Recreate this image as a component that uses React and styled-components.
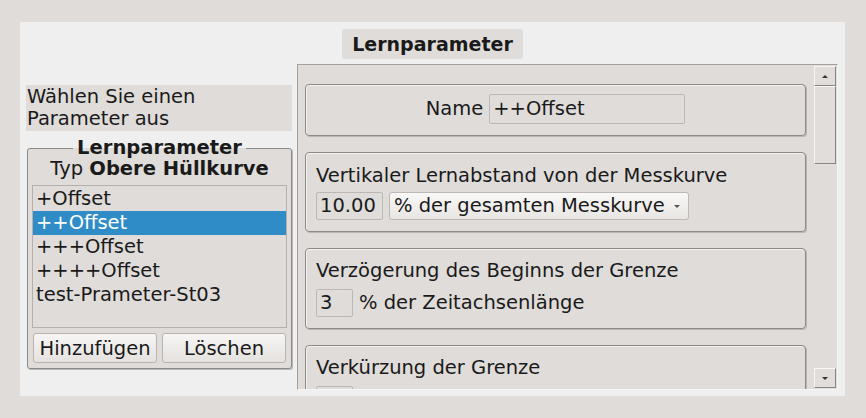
import React from 'react';
import styled, {createGlobalStyle} from 'styled-components';

const GlobalStyle = createGlobalStyle`
    html, body {
        margin: 0;
        padding: 0;
        background: #dfdcd9;
    }
    body {
        font-family: "DejaVu Sans", sans-serif;
        font-size: 19.5px;
        color: #1a1a1a;
    }
`;

const Window = styled.div`
    width: 866px;
    height: 418px;
    padding: 22px 21px 22px 20px;
    box-sizing: border-box;
`;

const Panel = styled.div`
    width: 825px;
    height: 374px;
    background: #efefef;
    display: flex;
    flex-direction: column;
    align-items: center;
`;

const Title = styled.div`
    margin-top: 7px;
    height: 30px;
    line-height: 30px;
    padding: 0 10px;
    background: #dfdcd9;
    border-radius: 3px;
    font-weight: bold;
    font-size: 19px;
`;

const Body = styled.div`
    align-self: stretch;
    flex: 1;
    display: flex;
    gap: 5px;
    margin-top: 5px;
    padding: 0 7px 6px 6px;
    min-height: 0;
`;

const LeftColumn = styled.div`
    width: 266px;
    padding-top: 21px;
    display: flex;
    flex-direction: column;
`;

const Hint = styled.div`
    background: #dfdcd9;
    height: 46px;
    padding: 1px 0 0 1px;
    box-sizing: border-box;
    line-height: 22px;
`;

const Group = styled.fieldset`
    margin: 6px 0 0 1px;
    padding: 0 4px 5px;
    border: 1px solid #8c8a88;
    border-radius: 3px;
    background: #dfdcd9;
    box-shadow: 1px 1px 0 #b9b6b3;
    display: flex;
    flex-direction: column;
    min-width: 0;
`;

const Legend = styled.legend`
    margin: 0 auto;
    padding: 0 4px;
    font-weight: bold;
    line-height: 22px;
`;

const TypeLine = styled.div`
    text-align: center;
    line-height: 22px;
    margin-top: -1px;
    b {
        font-weight: bold;
    }
`;

const List = styled.div`
    margin-top: 5px;
    height: 143px;
    box-sizing: border-box;
    border: 1px solid #b3b0ad;
    padding-top: 1px;
    background: #dfdcd9;
`;

const ListItem = styled.div`
    height: 24px;
    line-height: 23px;
    padding-left: 3px;
    white-space: nowrap;
    background: ${p => (p.$selected ? '#308cc6' : 'transparent')};
    color: ${p => (p.$selected ? '#ffffff' : '#1a1a1a')};
`;

const ButtonRow = styled.div`
    margin-top: 5px;
    display: grid;
    grid-template-columns: 1fr 1fr;
    gap: 5px;
    padding: 0 1px;
`;

const Button = styled.button`
    height: 30px;
    font: inherit;
    color: #1a1a1a;
    border: 1px solid #b8b4b0;
    border-radius: 3px;
    background: linear-gradient(#f7f6f5, #e4e1de);
    padding: 0;
`;

const ScrollArea = styled.div`
    flex: 1;
    display: flex;
    border: 1px solid;
    border-color: #a3a09d #f6f5f4 #f6f5f4 #a3a09d;
    background: #dfdcd9;
    min-height: 0;
`;

const Content = styled.div`
    flex: 1;
    overflow: hidden;
    padding: 19px 8px 0 7px;
    display: flex;
    flex-direction: column;
    gap: 16px;
`;

const Box = styled.div`
    flex-shrink: 0;
    border: 1px solid #8c8a88;
    border-radius: 4px;
    box-shadow: inset 1px 1px 0 #f3f2f1, 1px 1px 0 #b9b6b3;
    padding: ${p => p.$pad || '11px 10px 11px'};
    display: flex;
    flex-direction: column;
    gap: ${p => p.$gap || 7}px;
`;

const Row = styled.div`
    display: flex;
    align-items: center;
    gap: 6px;
    justify-content: ${p => (p.$center ? 'center' : 'flex-start')};
    line-height: 22px;
    white-space: nowrap;
`;

const Label = styled.div`
    line-height: 22px;
    white-space: nowrap;
`;

const Field = styled.div`
    width: ${p => p.$w}px;
    height: ${p => p.$h || 28}px;
    box-sizing: border-box;
    border: 1px solid #bbb8b5;
    border-radius: 2px;
    padding-left: 3px;
    display: flex;
    align-items: center;
    background: #dfdcd9;
`;

const Combo = styled.div`
    width: 300px;
    height: 28px;
    box-sizing: border-box;
    border: 1px solid #bbb8b5;
    border-radius: 3px;
    background: linear-gradient(#f9f8f7, #e8e6e3);
    display: flex;
    align-items: center;
    justify-content: space-between;
    padding: 0 8px 0 4px;
`;

const ComboArrow = styled.span`
    width: 0;
    height: 0;
    border-left: 3px solid transparent;
    border-right: 3px solid transparent;
    border-top: 3px solid #555;
`;

const ScrollBar = styled.div`
    width: 22px;
    margin: 1px 1px 1px 0;
    display: flex;
    flex-direction: column;
`;

const ScrollButton = styled.div`
    height: 20px;
    box-sizing: border-box;
    border: 1px solid;
    border-color: #f8f7f6 #888684 #888684 #f8f7f6;
    background: #e0ddda;
    display: flex;
    align-items: center;
    justify-content: center;
`;

const Thumb = styled.div`
    height: 78px;
    box-sizing: border-box;
    border: 1px solid;
    border-color: #f8f7f6 #888684 #888684 #f8f7f6;
    background: #e0ddda;
`;

const Track = styled.div`
    flex: 1;
    background: #dfdcd9;
`;

const Tri = styled.span`
    width: 0;
    height: 0;
    border-left: 3px solid transparent;
    border-right: 3px solid transparent;
    ${p => (p.$up ? 'border-bottom: 3px solid #333;' : 'border-top: 3px solid #333;')}
`;

const params = ['+Offset', '++Offset', '+++Offset', '++++Offset', 'test-Prameter-St03'];

export default function App() {
    return (
        <Window>
            <GlobalStyle />
            <Panel>
                <Title>Lernparameter</Title>
                <Body>
                    <LeftColumn>
                        <Hint>Wählen Sie einen<br />Parameter aus</Hint>
                        <Group>
                            <Legend>Lernparameter</Legend>
                            <TypeLine>Typ <b>Obere Hüllkurve</b></TypeLine>
                            <List>
                                {params.map((p, i) => (
                                    <ListItem key={p} $selected={i === 1}>{p}</ListItem>
                                ))}
                            </List>
                            <ButtonRow>
                                <Button>Hinzufügen</Button>
                                <Button>Löschen</Button>
                            </ButtonRow>
                        </Group>
                    </LeftColumn>
                    <ScrollArea>
                        <Content>
                            <Box $pad="9px 10px 11px">
                                <Row $center>
                                    Name
                                    <Field $w={196} $h={30}>++Offset</Field>
                                </Row>
                            </Box>
                            <Box $pad="12px 10px 11px" $gap={5}>
                                <Label>Vertikaler Lernabstand von der Messkurve</Label>
                                <Row>
                                    <Field $w={67}>10.00</Field>
                                    <Combo>% der gesamten Messkurve<ComboArrow /></Combo>
                                </Row>
                            </Box>
                            <Box>
                                <Label>Verzögerung des Beginns der Grenze</Label>
                                <Row>
                                    <Field $w={37}>3</Field>
                                    % der Zeitachsenlänge
                                </Row>
                            </Box>
                            <Box>
                                <Label>Verkürzung der Grenze</Label>
                                <Row>
                                    <Field $w={37} />
                                </Row>
                            </Box>
                        </Content>
                        <ScrollBar>
                            <ScrollButton><Tri $up /></ScrollButton>
                            <Thumb />
                            <Track />
                            <ScrollButton><Tri /></ScrollButton>
                        </ScrollBar>
                    </ScrollArea>
                </Body>
            </Panel>
        </Window>
    );
}
